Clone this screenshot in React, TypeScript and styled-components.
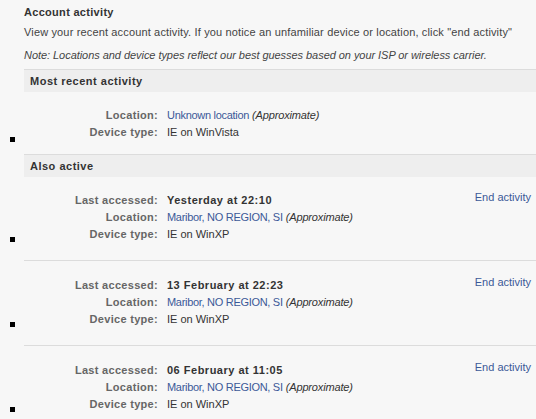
import React from "react";
import styled, { createGlobalStyle } from "styled-components";

const Global = createGlobalStyle`
  html, body { margin: 0; padding: 0; background: #f7f7f7; }
  body { font-family: "Liberation Sans", Arial, sans-serif; font-size: 11px; color: #333; }
`;

const Page = styled.div`
  width: 536px;
  height: 419px;
  overflow: hidden;
  background: #f7f7f7;
`;

const Intro = styled.div`
  padding: 4px 0 0 24px;
`;

const Title = styled.div`
  font-weight: bold;
  line-height: 17px;
  letter-spacing: 0.3px;
  color: #333;
`;

const Desc = styled.div`
  margin-top: 3px;
  line-height: 17px;
  letter-spacing: 0.15px;
  color: #444;
`;

const Note = styled.div`
  margin-top: 6px;
  line-height: 17px;
  font-style: italic;
  letter-spacing: -0.05px;
  color: #444;
`;

const Band = styled.div<{ $top: number }>`
  margin: ${(p) => p.$top}px 0 0 24px;
  border-top: 1px solid #dcdcdc;
  background: #eeeeee;
  padding: 0 0 0 6px;
  height: 22px;
  line-height: 22px;
  font-weight: bold;
  letter-spacing: 0.5px;
  color: #333;
`;

const Entry = styled.div`
  display: grid;
  grid-template-columns: 24px 1fr;
`;

const Gutter = styled.div<{ $bottom: number }>`
  display: flex;
  align-items: flex-end;
  padding: 0 0 ${(p) => p.$bottom}px 10px;
`;

const Marker = styled.span`
  width: 5px;
  height: 5px;
  background: #000;
`;

const Body = styled.div<{ $top: number; $bottom: number; $line: boolean }>`
  display: flex;
  justify-content: space-between;
  align-items: flex-start;
  padding: ${(p) => p.$top}px 5px ${(p) => p.$bottom}px 0;
  border-top: 1px solid ${(p) => (p.$line ? "#dcdcdc" : "transparent")};
`;

const Fields = styled.div`
  display: grid;
  grid-template-columns: 134px auto;
  column-gap: 9px;
  line-height: 17px;
`;

const Label = styled.div`
  text-align: right;
  font-weight: bold;
  letter-spacing: 0.3px;
  color: #666;
`;

const Value = styled.div<{ $strong?: boolean }>`
  color: #333;
  font-weight: ${(p) => (p.$strong ? "bold" : "normal")};
  letter-spacing: ${(p) => (p.$strong ? "0.5px" : "0")};
  white-space: nowrap;
`;

const Link = styled.a`
  color: #3b5998;
  text-decoration: none;
  cursor: pointer;
`;

const Place = styled(Link)`
  letter-spacing: -0.3px;
`;

const Approx = styled.i`
  color: #333;
  letter-spacing: -0.15px;
`;

const EndLink = styled(Link)`
  line-height: 17px;
  margin-top: -3px;
`;

type Item = { when?: string; where: string; device: string };

const items: Item[] = [
  { when: "Yesterday at 22:10", where: "Maribor, NO REGION, SI", device: "IE on WinXP" },
  { when: "13 February at 22:23", where: "Maribor, NO REGION, SI", device: "IE on WinXP" },
  { when: "06 February at 11:05", where: "Maribor, NO REGION, SI", device: "IE on WinXP" },
];

function Details({ item }: { item: Item }) {
  return (
    <Fields>
      {item.when && (
        <>
          <Label>Last accessed:</Label>
          <Value $strong>{item.when}</Value>
        </>
      )}
      <Label>Location:</Label>
      <Value>
        <Place>{item.where}</Place> <Approx>(Approximate)</Approx>
      </Value>
      <Label>Device type:</Label>
      <Value>{item.device}</Value>
    </Fields>
  );
}

export default function App() {
  return (
    <Page>
      <Global />
      <Intro>
        <Title>Account activity</Title>
        <Desc>
          View your recent account activity. If you notice an unfamiliar device or location, click "end activity"
        </Desc>
        <Note>Note: Locations and device types reflect our best guesses based on your ISP or wireless carrier.</Note>
      </Intro>
      <Band $top={5}>Most recent activity</Band>
      <Entry>
        <Gutter $bottom={12}>
          <Marker />
        </Gutter>
        <Body $top={14} $bottom={13} $line={false}>
          <Details item={{ where: "Unknown location", device: "IE on WinVista" }} />
        </Body>
      </Entry>
      <Band $top={0}>Also active</Band>
      {items.map((it, i) => (
        <Entry key={i}>
          <Gutter $bottom={18}>
            <Marker />
          </Gutter>
          <Body $top={i === 0 ? 14 : 16} $bottom={17} $line={i > 0}>
            <Details item={it} />
            <EndLink>End activity</EndLink>
          </Body>
        </Entry>
      ))}
    </Page>
  );
}
